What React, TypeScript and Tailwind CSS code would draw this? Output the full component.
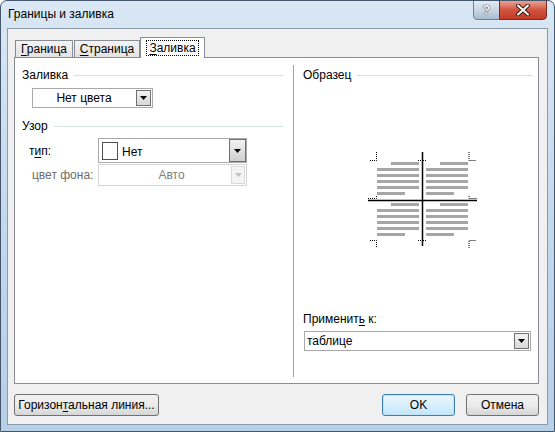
import React from "react";

const font = { fontFamily: '"Segoe UI", "Liberation Sans", Arial, sans-serif' };

function Arrow({ disabled = false, dark = false }: { disabled?: boolean; dark?: boolean }) {
  return (
    <div
      className={`flex flex-1 items-center justify-center border ${
        disabled
          ? "border-[#d9d9d9] bg-[#f4f4f4]"
          : dark
          ? "border-[#6f6f6f] bg-gradient-to-b from-[#f2f2f2] to-[#cfcfcf]"
          : "border-[#707070] bg-gradient-to-b from-[#f2f2f2] to-[#d8d8d8]"
      }`}
    >
      <svg width="7" height="4" viewBox="0 0 7 4">
        <path d="M0 0h7L3.5 4z" fill={disabled ? "#c2c2c2" : "#000"} />
      </svg>
    </div>
  );
}

function GroupHeader({ label, className = "" }: { label: string; className?: string }) {
  return (
    <div className={`flex items-center ${className}`}>
      <span className="leading-[15px]">{label}</span>
      <div className="ml-[6px] h-px flex-1 bg-[#d5dfe5]" />
    </div>
  );
}

function Preview() {
  const grey = "#a6a6a6";
  const rowsTop = [12, 18, 24, 30, 36, 42];
  const rowsBot = [53, 59, 65, 71, 77, 83];
  const block = (rows: number[], x0: number, x1: number, shortStart: number, shortEnd: number) =>
    rows.map((y, i) => {
      let a = x0;
      let b = x1;
      if (i === 0) a = shortStart;
      if (i === rows.length - 1) b = shortEnd;
      return <rect key={`${x0}-${y}`} x={a} y={y} width={b - a} height={3} fill={grey} />;
    });
  const dot = { stroke: "#000", strokeWidth: 1, strokeDasharray: "1 1", fill: "none" };
  return (
    <svg width="115" height="100" viewBox="0 0 115 100" className="block">
      {block(rowsTop, 12, 54, 26, 40)}
      {block(rowsTop, 61, 103, 75, 89)}
      {block(rowsBot, 12, 54, 26, 40)}
      {block(rowsBot, 61, 103, 75, 89)}
      <line x1="57.5" y1="2" x2="57.5" y2="96" stroke="#000" strokeWidth="1.5" />
      <line x1="3" y1="50.5" x2="112" y2="50.5" stroke="#000" strokeWidth="1.5" />
      {/* corner marks */}
      <path d="M5 10.5h6.5V2" {...dot} />
      <path d="M104 2v8.5h7" {...dot} />
      <path d="M5 90.5h6.5V98" {...dot} />
      <path d="M104 98v-7.5h7" {...dot} />
      <path d="M53 10.5h4M58 10.5h3" {...dot} />
      <path d="M53 90.5h4M58 90.5h3" {...dot} />
      <path d="M3 48.5h8.5V46" {...dot} />
      <path d="M104 46v2.5h8" {...dot} />
    </svg>
  );
}

export default function App() {
  return (
    <div
      style={font}
      className="flex h-[432px] w-[555px] flex-col overflow-hidden rounded-t-[7px] border border-[#44566b] bg-gradient-to-b from-[#dae7f4] via-[#c4d8ee] to-[#b8cfe8] text-[12px] text-black"
    >
      {/* title bar */}
      <div className="flex h-[27px] shrink-0 items-start">
        <div className="pl-[7px] pt-[6px] leading-[15px]">Границы и заливка</div>
        <div className="ml-auto mr-[7px] flex -mt-px">
          <div className="flex h-[20px] w-[27px] items-center justify-center rounded-bl-[4px] border border-[#6e7f93] bg-gradient-to-b from-[#e3ebf3] via-[#c9d6e3] to-[#a9bcd0] text-[13px] font-bold text-white [text-shadow:0_0_1px_#222,0_0_1px_#222]">
            ?
          </div>
          <div className="-ml-px flex h-[20px] w-[48px] items-center justify-center rounded-br-[4px] border border-[#7b2a22] bg-gradient-to-b from-[#e8a493] via-[#d0523f] to-[#c23a27]">
            <svg width="14" height="12" viewBox="0 0 14 12">
              <path d="M2 1.5l10 9M12 1.5l-10 9" stroke="#3a1a14" strokeWidth="4" strokeLinecap="round" />
              <path d="M2 1.5l10 9M12 1.5l-10 9" stroke="#fff" strokeWidth="2" strokeLinecap="round" />
            </svg>
          </div>
        </div>
      </div>

      {/* client area */}
      <div className="mx-[6px] flex h-[397px] shrink-0 flex-col border border-[#8a9bad] bg-[#f0f0f0]">
        {/* tabs */}
        <div className="relative z-10 flex h-[28px] items-end pl-[7px] pt-[9px]">
          <div className="flex h-[17px] w-[58px] items-center justify-center border border-b-0 border-[#898c95] bg-gradient-to-b from-[#f3f3f3] to-[#e3e3e3] leading-[15px]">
            <span>
              <span className="underline underline-offset-2">Г</span>раница
            </span>
          </div>
          <div className="ml-px flex h-[17px] w-[66px] items-center justify-center border border-b-0 border-[#898c95] bg-gradient-to-b from-[#f3f3f3] to-[#e3e3e3] leading-[15px]">
            <span>
              <span className="underline underline-offset-2">С</span>траница
            </span>
          </div>
          <div className="-mb-px flex h-[21px] w-[65px] items-center justify-center border border-b-0 border-[#898c95] bg-white pb-px">
            <span className="border border-dotted border-black px-[2px] leading-[14px]">
              <span className="underline underline-offset-2">З</span>аливка
            </span>
          </div>
        </div>

        {/* panel */}
        <div className="ml-[6px] flex h-[327px] w-[525px] border border-[#898c95] bg-white">
          {/* left column */}
          <div className="flex w-[278px] flex-col pt-[10px]">
            <GroupHeader label="Заливка" className="mr-[10px] pl-[7px]" />
            <div className="ml-[17px] mt-[5px] flex h-[20px] w-[121px] border border-[#a9a9a9]">
              <div className="flex flex-1 items-center justify-center pb-px">Нет цвета</div>
              <div className="flex p-px">
                <div className="flex w-[15px]">
                  <Arrow />
                </div>
              </div>
            </div>
            <GroupHeader label="Узор" className="mr-[10px] mt-[11px] pl-[7px]" />
            <div className="mt-[4px] flex items-center pl-[14px]">
              <div className="w-[69px]">
                т<span className="underline underline-offset-2">и</span>п:
              </div>
              <div className="flex h-[25px] w-[149px] border border-[#a9a9a9]">
                <div className="flex flex-1 items-end pb-[2px] pl-[3px]">
                  <div className="h-[18px] w-[16px] border border-[#505050] bg-white" />
                  <span className="ml-[4px] leading-[15px]">Нет</span>
                </div>
                <div className="flex w-[17px]">
                  <Arrow dark />
                </div>
              </div>
            </div>
            <div className="mt-px flex items-center pl-[17px] text-[#6d6d6d]">
              <div className="w-[66px]">цвет фона:</div>
              <div className="flex h-[22px] w-[149px] border border-[#d4d4d4]">
                <div className="flex flex-1 items-center justify-center pl-[14px] text-[#808080]">Авто</div>
                <div className="flex p-px">
                  <div className="flex w-[14px]">
                    <Arrow disabled />
                  </div>
                </div>
              </div>
            </div>
          </div>

          {/* separator */}
          <div className="mb-[6px] mt-[7px] w-px bg-[#a0a0a0]" />

          {/* right column */}
          <div className="flex flex-1 flex-col pl-[9px] pt-[10px]">
            <GroupHeader label="Образец" className="mr-[5px]" />
            <div className="ml-[62px] mt-[67px]">
              <Preview />
            </div>
            <div className="mt-[62px] leading-[15px]">
              Применит<span className="underline underline-offset-2">ь</span> к:
            </div>
            <div className="ml-px mt-[4px] flex h-[20px] w-[227px] border border-[#a9a9a9]">
              <div className="flex flex-1 items-center pb-px pl-[2px]">таблице</div>
              <div className="flex p-px">
                <div className="flex w-[15px]">
                  <Arrow />
                </div>
              </div>
            </div>
          </div>
        </div>

        {/* buttons */}
        <div className="ml-[6px] mt-[10px] flex w-[525px] items-center">
          <button className="flex h-[22px] w-[145px] items-center justify-center rounded-[3px] border border-[#707070] bg-gradient-to-b from-[#f2f2f2] via-[#ebebeb] to-[#d6d6d6] pb-px">
            <span>
              Горизон<span className="underline underline-offset-2">т</span>альная линия...
            </span>
          </button>
          <button className="ml-auto flex h-[22px] w-[73px] items-center justify-center rounded-[3px] border border-[#3c7fb1] bg-gradient-to-b from-[#eaf6fd] via-[#d9f0fc] to-[#bee6fd] pb-px shadow-[inset_0_0_0_1px_#c2e4f6]">
            OK
          </button>
          <button className="ml-[11px] flex h-[22px] w-[73px] items-center justify-center rounded-[3px] border border-[#707070] bg-gradient-to-b from-[#f2f2f2] via-[#ebebeb] to-[#d6d6d6] pb-px">
            Отмена
          </button>
        </div>
      </div>
    </div>
  );
}
